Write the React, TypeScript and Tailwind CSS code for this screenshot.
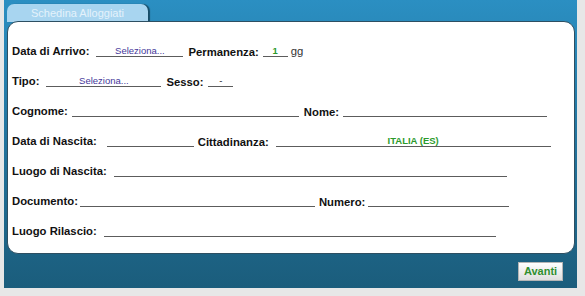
import React from 'react';

const font = { fontFamily: '"Liberation Sans", Arial, sans-serif' };

function Label({ children }: { children: React.ReactNode }) {
  return <span className="text-[11.3px] leading-[13px] font-bold text-[#111] whitespace-nowrap">{children}</span>;
}

function Field({ w, ml, children, tone }: { w: number; ml: number; children?: React.ReactNode; tone?: 'purple' | 'green' | 'dark' }) {
  const color = tone === 'green' ? 'text-[#2c9a2c] font-bold' : tone === 'purple' ? 'text-[#45389a]' : 'text-[#222]';
  return (
    <span
      className={`inline-flex h-[11px] items-end justify-center border-b border-[#5c5c5c] text-[9.5px] leading-[10px] ${color}`}
      style={{ width: w, marginLeft: ml }}
    >
      {children}
    </span>
  );
}

function Row({ children }: { children: React.ReactNode }) {
  return <div className="flex h-[30px] items-center">{children}</div>;
}

export default function App() {
  return (
    <div className="w-[585px] h-[296px] bg-[#e7e7e7] pl-[4px] pr-[8px] pb-[8px]" style={font}>
      <div className="h-[288px] flex flex-col px-[3px] pt-[4px] bg-gradient-to-b from-[#2b8fc2] via-[#22739c] to-[#1b5d7c]">
        <div className="w-[141px] h-[18px] rounded-t-[7px] bg-[#a8d5f0] shadow-[2px_0_1px_rgba(0,0,0,0.45)] flex items-center justify-center">
          <span className="text-[11px] text-[#e4f2fb] leading-none">Schedina Alloggiati</span>
        </div>
        <div className="h-[233px] -mt-[1px] w-[568px] bg-white rounded-[11px] border border-[#2d4f62] pt-[14px] pl-[4px]">
          <Row>
            <Label>Data di Arrivo:</Label>
            <Field w={87} ml={7} tone="purple">Seleziona...</Field>
            <span className="ml-[5px]"><Label>Permanenza:</Label></span>
            <Field w={25} ml={4} tone="green">1</Field>
            <span className="ml-[3px] text-[11.3px] text-[#333]">gg</span>
          </Row>
          <Row>
            <Label>Tipo:</Label>
            <Field w={115} ml={7} tone="purple">Seleziona...</Field>
            <span className="ml-[5px]"><Label>Sesso:</Label></span>
            <Field w={25} ml={5} tone="dark">-</Field>
          </Row>
          <Row>
            <Label>Cognome:</Label>
            <Field w={227} ml={4} />
            <span className="ml-[5px]"><Label>Nome:</Label></span>
            <Field w={204} ml={4} />
          </Row>
          <Row>
            <Label>Data di Nascita:</Label>
            <Field w={87} ml={10} />
            <span className="ml-[4px]"><Label>Cittadinanza:</Label></span>
            <Field w={275} ml={7} tone="green">ITALIA (ES)</Field>
          </Row>
          <Row>
            <Label>Luogo di Nascita:</Label>
            <Field w={393} ml={7} />
          </Row>
          <Row>
            <Label>Documento:</Label>
            <Field w={235} ml={2} />
            <span className="ml-[4px]"><Label>Numero:</Label></span>
            <Field w={141} ml={3} />
          </Row>
          <Row>
            <Label>Luogo Rilascio:</Label>
            <Field w={392} ml={7} />
          </Row>
        </div>
        <div className="flex-1 flex items-center justify-end pr-[11px]">
          <button className="w-[45px] h-[19px] bg-gradient-to-b from-white to-[#dedede] border border-[#b5b5b5] text-[11px] font-bold text-[#2f8f2f] leading-none">
            Avanti
          </button>
        </div>
      </div>
    </div>
  );
}
